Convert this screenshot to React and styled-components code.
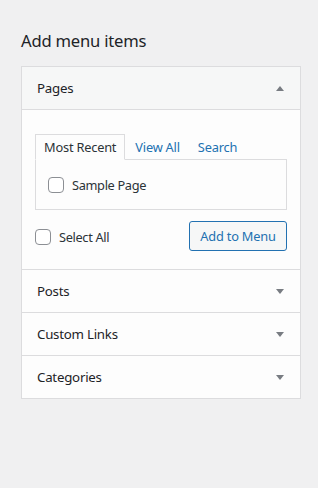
import React from "react";
import styled, { createGlobalStyle } from "styled-components";

const Global = createGlobalStyle`
  html, body { margin: 0; padding: 0; background: #f0f0f1; }
  body { font-family: "Noto Sans", "Open Sans", sans-serif; color: #1d2327; }
`;

const Page = styled.div`
  padding: 29px 17px 0 21px;
  width: 318px;
  height: 488px;
  box-sizing: border-box;
`;

const Title = styled.h2`
  margin: 0 0 13px;
  font-size: 16.6px;
  letter-spacing: -0.2px;
  line-height: 24px;
  font-weight: 400;
  color: #1d2327;
`;

const Panel = styled.div`
  width: 280px;
  box-sizing: border-box;
  border: 1px solid #dcdcde;
  background: #fdfdfd;
`;

const Section = styled.div`
  border-top: ${(p) => (p.$first ? "none" : "1px solid #dcdcde")};
`;

const Header = styled.div`
  height: 42px;
  display: flex;
  align-items: center;
  justify-content: space-between;
  padding: 0 15px;
  background: ${(p) => (p.$open ? "#f6f7f7" : "#fdfdfd")};
  border-bottom: ${(p) => (p.$open ? "1px solid #dcdcde" : "none")};
  font-size: 13.3px;
  letter-spacing: -0.25px;
  color: #1d2327;
`;

const Arrow = styled.span`
  width: 0;
  height: 0;
  border-left: 4.5px solid transparent;
  border-right: 4.5px solid transparent;
  ${(p) =>
    p.$up
      ? "border-bottom: 5px solid #787c82;"
      : "border-top: 5px solid #787c82;"}
  margin-right: 1px;
`;

const Content = styled.div`
  padding: 24px 13px 18px;
  background: #fdfdfd;
`;

const Tabs = styled.div`
  display: flex;
  align-items: flex-end;
  height: 25px;
`;

const Tab = styled.div`
  box-sizing: border-box;
  height: ${(p) => (p.$active ? "26px" : "25px")};
  margin-bottom: ${(p) => (p.$active ? "-1px" : "0")};
  padding: 0 8px;
  display: flex;
  align-items: center;
  font-size: 12.8px;
  letter-spacing: -0.2px;
  color: ${(p) => (p.$active ? "#2c3338" : "#2271b1")};
  border: ${(p) => (p.$active ? "1px solid #dcdcde" : "1px solid transparent")};
  border-bottom: ${(p) => (p.$active ? "1px solid #fdfdfd" : "none")};
  background: ${(p) => (p.$active ? "#fdfdfd" : "transparent")};
  position: relative;
  z-index: 1;
  margin-left: ${(p) => p.$ml || 0}px;
`;

const TabPanel = styled.div`
  border: 1px solid #dcdcde;
  padding: 17px 12px 16px;
  background: #fdfdfd;
`;

const CheckRow = styled.label`
  display: flex;
  align-items: center;
  gap: 8px;
  font-size: 12.8px;
  letter-spacing: -0.35px;
  color: #2c3338;
  line-height: 16px;
`;

const Box = styled.span`
  width: 16px;
  height: 16px;
  box-sizing: border-box;
  border: 1px solid #8c8f94;
  border-radius: 4px;
  background: #fff;
  flex: none;
`;

const Actions = styled.div`
  display: flex;
  align-items: center;
  justify-content: space-between;
  margin-top: 11px;
`;

const SelectAll = styled(CheckRow)`
  margin-top: 2px;
`;

const Button = styled.button`
  box-sizing: border-box;
  width: 98px;
  height: 30px;
  border: 1px solid #2271b1;
  border-radius: 3px;
  background: #f6f7f7;
  color: #2271b1;
  font-family: inherit;
  font-size: 12.8px;
  letter-spacing: -0.2px;
  padding: 0;
  cursor: pointer;
`;

export default function App() {
  return (
    <Page>
      <Global />
      <Title>Add menu items</Title>
      <Panel>
        <Section $first>
          <Header $open>
            <span>Pages</span>
            <Arrow $up />
          </Header>
          <Content>
            <Tabs>
              <Tab $active>Most Recent</Tab>
              <Tab $ml={1}>View All</Tab>
              <Tab>Search</Tab>
            </Tabs>
            <TabPanel>
              <CheckRow>
                <Box />
                Sample Page
              </CheckRow>
            </TabPanel>
            <Actions>
              <SelectAll>
                <Box />
                Select All
              </SelectAll>
              <Button>Add to Menu</Button>
            </Actions>
          </Content>
        </Section>
        {["Posts", "Custom Links", "Categories"].map((t) => (
          <Section key={t}>
            <Header>
              <span>{t}</span>
              <Arrow />
            </Header>
          </Section>
        ))}
      </Panel>
    </Page>
  );
}
